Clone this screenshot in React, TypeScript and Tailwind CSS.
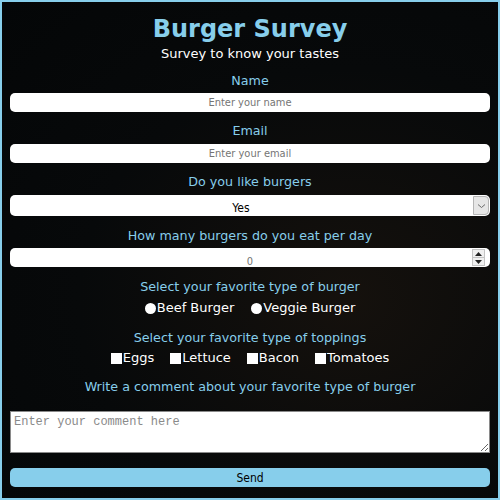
import { useState } from "react"

const label = "text-[12.7px] leading-4 text-[#87ceeb] text-center"
const field =
  "w-full h-[19px] rounded-[5px] bg-white text-center text-[11px] text-black placeholder:text-[#757575] outline-none font-['DejaVu_Sans_Condensed','Liberation_Sans',sans-serif]"

function Radio({ text }: { text: string }) {
  return (
    <label className="flex items-center">
      <span className="w-[11px] h-[11px] rounded-full bg-white" />
      <span className="ml-[1px]">{text}</span>
    </label>
  )
}

function Check({ text }: { text: string }) {
  return (
    <label className="flex items-center">
      <span className="w-[11px] h-[11px] bg-white" />
      <span className="ml-[1px]">{text}</span>
    </label>
  )
}

export default function App() {
  const [likes, setLikes] = useState("Yes")

  return (
    <div className="h-[500px] w-[500px] border-2 border-[#87ceeb] bg-[radial-gradient(ellipse_at_70%_60%,#15110d_0%,#07090a_55%,#040607_100%)] font-['DejaVu_Sans',Verdana,sans-serif] text-white">
      <form className="flex flex-col px-[8px]" onSubmit={(e) => e.preventDefault()}>
        {/* HEADER */}
        <h1 className="mt-[12px] text-center text-[24px] leading-[30px] font-bold text-[#87ceeb]">
          Burger Survey
        </h1>
        <p className="mt-[2px] text-center text-[13px] leading-4">Survey to know your tastes</p>

        {/* TEXT FIELDS */}
        <p className={`mt-[11px] ${label}`}>Name</p>
        <input className={`mt-[4px] ${field}`} placeholder="Enter your name" />

        <p className={`mt-[11px] ${label}`}>Email</p>
        <input className={`mt-[5px] ${field}`} placeholder="Enter your email" />

        <p className={`mt-[11px] ${label}`}>Do you like burgers</p>
        <div className="relative mt-[5px] h-[21px] w-full rounded-[5px] bg-white">
          <select
            value={likes}
            onChange={(e) => setLikes(e.target.value)}
            className="h-full w-full appearance-none bg-transparent pr-[18px] text-center text-[12px] leading-[19px] text-black outline-none font-['DejaVu_Sans_Condensed','Liberation_Sans',sans-serif]"
          >
            <option>Yes</option>
            <option>No</option>
          </select>
          <span className="pointer-events-none absolute right-[1px] top-[1px] flex h-[19px] w-[16px] items-center justify-center rounded-r-[4px] border border-[#b5b5b5] bg-[#e6e6e6]">
            <svg width="9" height="6" viewBox="0 0 9 6">
              <path d="M1 1.5 L4.5 4.5 L8 1.5" fill="none" stroke="#6b6b6b" strokeWidth="1" />
            </svg>
          </span>
        </div>

        <p className={`mt-[12px] ${label}`}>How many burgers do you eat per day</p>
        <div className="relative mt-[4px] h-[19px] w-full rounded-[5px] bg-white">
          <input
            type="text"
            defaultValue="0"
            className="h-full w-full bg-transparent text-center text-[11px] text-[#757575] outline-none font-['DejaVu_Sans_Condensed','Liberation_Sans',sans-serif]"
          />
          <span className="pointer-events-none absolute right-[5px] top-[1px] flex h-[17px] w-[13px] flex-col border border-[#c4c4c4] bg-[#f0f0f0]">
            <span className="flex flex-1 items-center justify-center border-b border-[#c4c4c4]">
              <svg width="7" height="4" viewBox="0 0 7 4"><path d="M0 4 L3.5 0 L7 4 Z" fill="#222" /></svg>
            </span>
            <span className="flex flex-1 items-center justify-center">
              <svg width="7" height="4" viewBox="0 0 7 4"><path d="M0 0 L3.5 4 L7 0 Z" fill="#222" /></svg>
            </span>
          </span>
        </div>

        {/* RADIOS */}
        <p className={`mt-[12px] ${label}`}>Select your favorite type of burger</p>
        <div className="mt-[5px] flex justify-center gap-[17px] text-[13px] leading-4">
          <Radio text="Beef Burger" />
          <Radio text="Veggie Burger" />
        </div>

        {/* CHECKBOXES */}
        <p className={`mt-[14px] ${label}`}>Select your favorite type of toppings</p>
        <div className="mt-[4px] flex justify-center gap-[16px] text-[13px] leading-4">
          <Check text="Eggs" />
          <Check text="Lettuce" />
          <Check text="Bacon" />
          <Check text="Tomatoes" />
        </div>

        {/* COMMENT */}
        <p className={`mt-[13px] ${label}`}>Write a comment about your favorite type of burger</p>
        <textarea
          className="mt-[16px] h-[42px] w-full resize-y border border-[#8a8a8a] bg-white px-[3px] py-[1px] text-[12px] text-black placeholder:text-[#8a8a8a] outline-none font-['Liberation_Mono',monospace]"
          placeholder="Enter your comment here"
        />

        <button
          type="submit"
          className="mt-[15px] h-[19px] w-full rounded-[5px] bg-[#87ceeb] text-[12px] text-black font-['DejaVu_Sans_Condensed','Liberation_Sans',sans-serif]"
        >
          Send
        </button>
      </form>
    </div>
  )
}
